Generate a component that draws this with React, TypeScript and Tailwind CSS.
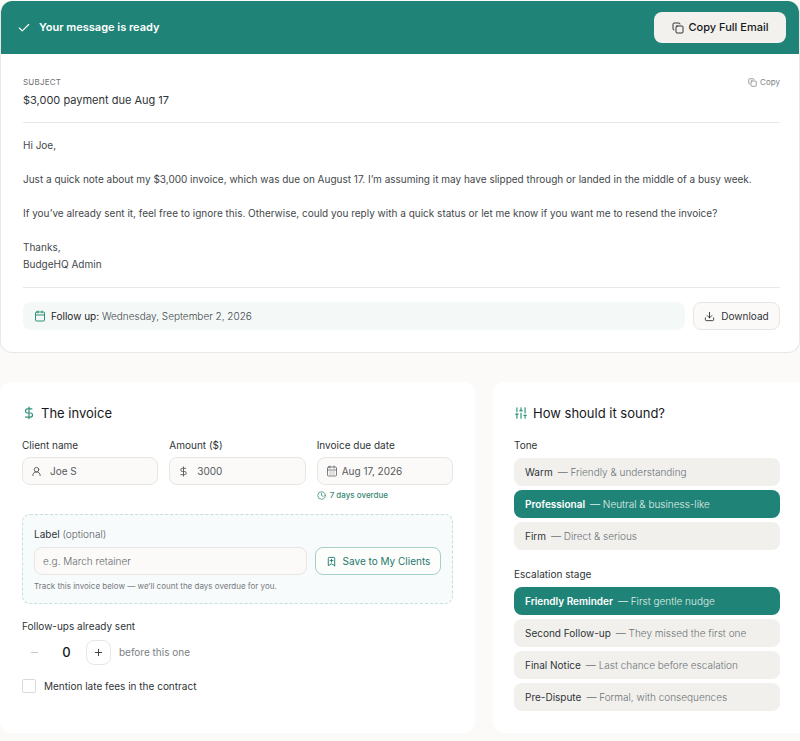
import React, { useState } from 'react';
import {
  BookmarkPlus,
  Calendar,
  CalendarDays,
  Check,
  Clock,
  Copy,
  DollarSign,
  Download,
  Minus,
  Plus,
  SlidersVertical,
  UserRound,
} from 'lucide-react';

interface Option {
  name: string;
  hint: string;
}

const TONES: Option[] = [
  { name: 'Warm', hint: 'Friendly & understanding' },
  { name: 'Professional', hint: 'Neutral & business-like' },
  { name: 'Firm', hint: 'Direct & serious' },
];

const STAGES: Option[] = [
  { name: 'Friendly Reminder', hint: 'First gentle nudge' },
  { name: 'Second Follow-up', hint: 'They missed the first one' },
  { name: 'Final Notice', hint: 'Last chance before escalation' },
  { name: 'Pre-Dispute', hint: 'Formal, with consequences' },
];

interface OptionListProps {
  label: string;
  options: Option[];
  value: string;
  onChange: (name: string) => void;
}

const OptionList: React.FC<OptionListProps> = ({ label, options, value, onChange }) => (
  <div role="group" aria-label={label}>
    <div className="text-[10px] leading-4 text-[#2f3437]">{label}</div>
    <div className="mt-[5px] flex flex-col gap-1">
      {options.map((option) => {
        const active = option.name === value;
        return (
          <button
            key={option.name}
            type="button"
            aria-pressed={active}
            onClick={() => onChange(option.name)}
            className={`flex h-7 items-center gap-[5px] rounded-lg px-[11px] text-left text-[10px] ${
              active ? 'bg-[#1f8477] text-white' : 'bg-[#f1f0ed] text-[#2f3437]'
            }`}
          >
            <span className={active ? 'font-semibold' : 'font-normal'}>{option.name}</span>
            <span className={active ? 'font-light text-[#e0efec]' : 'font-light text-[#6d7275]'}>— {option.hint}</span>
          </button>
        );
      })}
    </div>
  </div>
);

interface FieldProps {
  id: string;
  label: string;
  icon: React.ReactNode;
  value: string;
  onChange: (value: string) => void;
}

const Field: React.FC<FieldProps> = ({ id, label, icon, value, onChange }) => (
  <div className="min-w-0">
    <label htmlFor={id} className="block text-[10px] leading-4 text-[#2f3437]">
      {label}
    </label>
    <div className="mt-1 flex h-7 items-center rounded-lg border border-[#e8e6e2] bg-[#fbfaf9] pr-2 pl-2 text-[#55595c]">
      {icon}
      <input
        id={id}
        value={value}
        onChange={(e) => onChange(e.target.value)}
        className="w-full min-w-0 bg-transparent text-[10px] outline-none"
      />
    </div>
  </div>
);

const App: React.FC = () => {
  const [client, setClient] = useState('Joe S');
  const [amount, setAmount] = useState('3000');
  const [dueDate, setDueDate] = useState('Aug 17, 2026');
  const [label, setLabel] = useState('');
  const [followUps, setFollowUps] = useState(0);
  const [lateFees, setLateFees] = useState(false);
  const [tone, setTone] = useState('Professional');
  const [stage, setStage] = useState('Friendly Reminder');

  return (
    <div className="min-h-screen bg-[#fbfaf8] pt-px font-[Inter,'Liberation_Sans',sans-serif] text-[#2f3437]">
      <section className="overflow-hidden rounded-xl border border-t-0 border-[#e9e8e5] bg-white">
        <header className="flex h-[53px] items-center justify-between bg-[#1f8477] pr-[13px] pl-4">
          <div className="flex items-center gap-2 text-white">
            <Check size={14} strokeWidth={2} />
            <h1 className="text-[11px] font-semibold">Your message is ready</h1>
          </div>
          <button
            type="button"
            className="flex h-[31px] w-[132px] items-center justify-center gap-[5px] rounded-lg bg-[#f2f1ee] text-[11px] font-medium text-[#16191b]"
          >
            <Copy size={12} strokeWidth={1.75} />
            Copy Full Email
          </button>
        </header>

        <div className="pr-[19px] pb-[22px] pl-[22px]">
          <div className="flex items-start justify-between border-b border-[#e9e8e6] pt-[22px] pb-[13px]">
            <div>
              <div className="text-[8px] leading-3 tracking-wide text-[#6d7275]">SUBJECT</div>
              <div className="mt-1 text-[11px] leading-[17px]">$3,000 payment due Aug 17</div>
            </div>
            <button type="button" className="flex items-center gap-[3px] text-[8px] leading-3 text-[#7d8184]">
              <Copy size={9} />
              Copy
            </button>
          </div>

          <div className="border-b border-[#e9e8e6] py-3.5 text-[10px] leading-[17px] text-[#43484b]">
            <p>Hi Joe,</p>
            <p className="mt-[17px]">
              Just a quick note about my $3,000 invoice, which was due on August 17. I’m assuming it may have slipped
              through or landed in the middle of a busy week.
            </p>
            <p className="mt-[17px]">
              If you’ve already sent it, feel free to ignore this. Otherwise, could you reply with a quick status or let
              me know if you want me to resend the invoice?
            </p>
            <p className="mt-[17px]">
              Thanks,
              <br />
              BudgeHQ Admin
            </p>
          </div>

          <div className="mt-3.5 flex items-center gap-2">
            <div className="flex h-7 flex-1 items-center gap-[5px] rounded-lg bg-[#f4f8f7] px-[11px] text-[10px] text-[#43484b]">
              <Calendar size={12} className="text-[#2f9276]" />
              <span>
                <span className="text-[#1f2427]">Follow up:</span>{' '}
                <span className="font-light">Wednesday, September 2, 2026</span>
              </span>
            </div>
            <button
              type="button"
              className="flex h-7 w-[87px] items-center justify-center gap-1.5 rounded-lg border border-[#e8e6e2] bg-[#fbfaf9] text-[10px] text-[#2f3437]"
            >
              <Download size={11} />
              Download
            </button>
          </div>
        </div>
      </section>

      <div className="mt-[29px] grid grid-cols-[475fr_307fr] gap-[18px]">
        <section className="rounded-xl bg-white p-[22px]">
          <h2 className="flex items-center gap-[5px] text-[13px] leading-[18px] text-[#16191b]">
            <DollarSign size={14} className="text-[#2f9276]" />
            The invoice
          </h2>

          <div className="mt-[15px] grid grid-cols-3 gap-[11px]">
            <Field
              id="client"
              label="Client name"
              icon={<UserRound size={11} className="mr-2 shrink-0" />}
              value={client}
              onChange={setClient}
            />
            <Field
              id="amount"
              label="Amount ($)"
              icon={<DollarSign size={11} className="mr-2 shrink-0" />}
              value={amount}
              onChange={setAmount}
            />
            <div className="min-w-0">
              <Field
                id="due"
                label="Invoice due date"
                icon={<CalendarDays size={12} strokeWidth={1.5} className="mr-1 shrink-0" />}
                value={dueDate}
                onChange={setDueDate}
              />
              <div className="mt-1 flex items-center gap-1 text-[8px] leading-3 font-medium text-[#378773]">
                <Clock size={9} />7 days overdue
              </div>
            </div>
          </div>

          <div className="mt-[13px] rounded-lg border border-dashed border-[#c5dfda] bg-[#f8fbfc] p-[11px]">
            <label htmlFor="label" className="block text-[10px] leading-4 text-[#2f3437]">
              Label <span className="font-light text-[#55595c]">(optional)</span>
            </label>
            <div className="mt-[5px] flex gap-2">
              <input
                id="label"
                value={label}
                onChange={(e) => setLabel(e.target.value)}
                placeholder="e.g. March retainer"
                className="h-7 min-w-0 flex-1 rounded-lg border border-[#e8e6e2] bg-[#fbfaf9] px-2 text-[10px] font-light outline-none placeholder:text-[#65696c]"
              />
              <button
                type="button"
                className="flex h-7 w-[126px] items-center justify-center gap-1.5 rounded-lg border border-[#a5cfc8] bg-[#fdfdfc] text-[10px] text-[#1f7a6d]"
              >
                <BookmarkPlus size={11} />
                Save to My Clients
              </button>
            </div>
            <p className="mt-[5px] text-[8px] leading-3 text-[#75797c]">
              Track this invoice below — we’ll count the days overdue for you.
            </p>
          </div>

          <div className="mt-3.5 text-[10px] leading-4 text-[#2f3437]">Follow-ups already sent</div>
          <div className="mt-1.5 flex items-center">
            <button
              type="button"
              aria-label="Fewer follow-ups"
              disabled={followUps === 0}
              onClick={() => setFollowUps(followUps - 1)}
              className="flex size-[25px] items-center justify-center text-[#2f3437] disabled:text-[#c4c5c5]"
            >
              <Minus size={11} />
            </button>
            <span className="w-[39px] text-center text-[13px] font-medium text-[#16191b]">{followUps}</span>
            <button
              type="button"
              aria-label="More follow-ups"
              onClick={() => setFollowUps(followUps + 1)}
              className="flex size-[25px] items-center justify-center rounded-lg border border-[#e8e6e2] bg-white"
            >
              <Plus size={11} />
            </button>
            <span className="ml-2 text-[10px] text-[#7d8184]">before this one</span>
          </div>

          <label className="mt-[13px] flex items-center gap-2 text-[10px] leading-4">
            <input
              type="checkbox"
              checked={lateFees}
              onChange={(e) => setLateFees(e.target.checked)}
              className="size-3.5 appearance-none rounded-xs border border-[#dcdad7] bg-white checked:bg-[#1f8477]"
            />
            Mention late fees in the contract
          </label>
        </section>

        <section className="rounded-l-xl bg-white pt-[22px] pr-5 pb-[22px] pl-[21px]">
          <h2 className="flex items-center gap-[5px] text-[13px] leading-[18px] text-[#16191b]">
            <SlidersVertical size={14} className="text-[#2f9276]" />
            How should it sound?
          </h2>
          <div className="mt-[15px] flex flex-col gap-4">
            <OptionList label="Tone" options={TONES} value={tone} onChange={setTone} />
            <OptionList label="Escalation stage" options={STAGES} value={stage} onChange={setStage} />
          </div>
        </section>
      </div>
    </div>
  );
};

export default App;
